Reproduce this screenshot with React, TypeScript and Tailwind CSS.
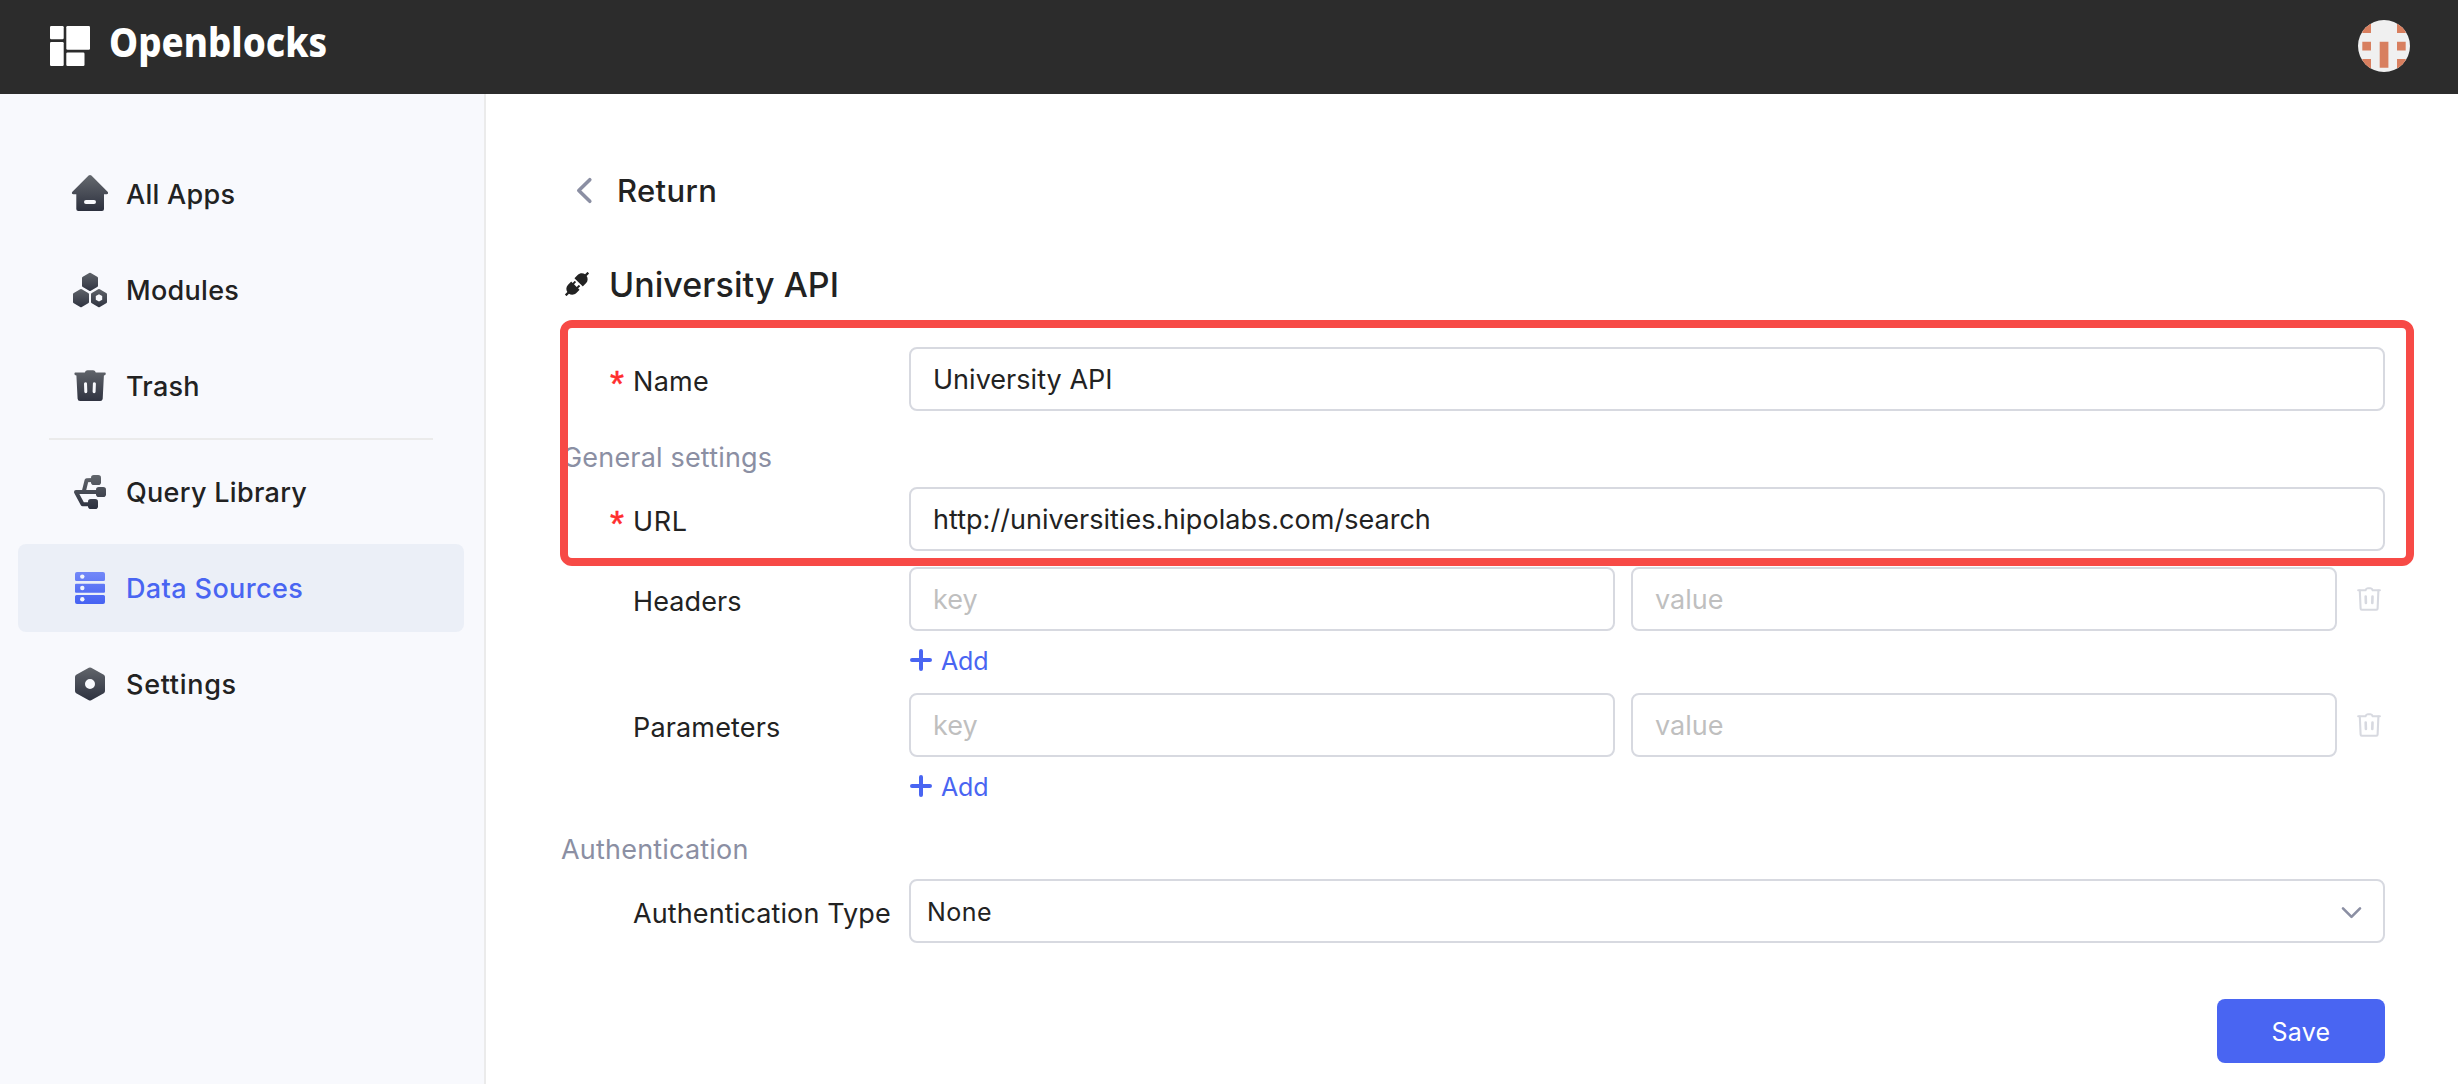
import React from "react";
import { AiFillApi } from "react-icons/ai";

function Gradient({ id, from = "#62666c", to = "#2c303e" }: { id: string; from?: string; to?: string }) {
  return (
    <defs>
      <linearGradient id={id} x1="0" y1="3" x2="0" y2="37" gradientUnits="userSpaceOnUse">
        <stop offset="0" stopColor={from} />
        <stop offset="1" stopColor={to} />
      </linearGradient>
    </defs>
  );
}

const iconClass = "h-10 w-10 shrink-0";

const HomeIcon = () => (
  <svg viewBox="0 0 40 40" className={iconClass}>
    <Gradient id="g-home" />
    <path
      fill="url(#g-home)"
      fillRule="evenodd"
      d="M18.6 1.6a2 2 0 0 1 2.8 0L37.6 17.7c1 1 .5 2.6-1 2.6H34V35a2 2 0 0 1-2 2H8.3a2 2 0 0 1-2-2V20.3H3.4c-1.500 0-2-1.600-1-2.600zM16 26a2 2 0 0 0 0 4h8a2 2 0 0 0 0-4z"
    />
  </svg>
);

const ModulesIcon = () => (
  <svg viewBox="0 0 40 40" className={iconClass}>
    <defs>
      <linearGradient id="g-mod" x1="0" y1="0" x2="0" y2="1">
        <stop offset="0" stopColor="#5f6369" />
        <stop offset="1" stopColor="#2f3340" />
      </linearGradient>
    </defs>
    <path fill="url(#g-mod)" d="M19.200 3a1.600 1.600 0 0 1 1.600 0l6.400 3.700a1.600 1.600 0 0 1 .8 1.400v7.600a1.600 1.600 0 0 1-.8 1.400l-6.400 3.700a1.600 1.600 0 0 1-1.600 0l-6.400-3.700a1.600 1.600 0 0 1-.8-1.400V8.100a1.600 1.600 0 0 1 .8-1.400z" />
    <path fill="url(#g-mod)" d="M10.200 19.200a1.600 1.600 0 0 1 1.600 0l6.400 3.700a1.600 1.600 0 0 1 .8 1.400v7.600a1.600 1.600 0 0 1-.8 1.400L11.800 36.900a1.600 1.600 0 0 1-1.600 0l-6.400-3.600a1.600 1.600 0 0 1-.8-1.400v-7.600a1.600 1.600 0 0 1 .8-1.400z" />
    <path fill="url(#g-mod)" fillRule="evenodd" d="M28.200 19.200a1.600 1.600 0 0 1 1.600 0l6.400 3.700a1.600 1.600 0 0 1 .8 1.400v7.600a1.600 1.600 0 0 1-.8 1.400L29.800 36.900a1.600 1.600 0 0 1-1.600 0l-6.400-3.600a1.600 1.600 0 0 1-.8-1.400v-7.600a1.600 1.600 0 0 1 .8-1.400zM29 24.200l-3.200 1.800v3.700l3.200 1.900 3.200-1.900V26z" />
  </svg>
);

const TrashIcon = () => (
  <svg viewBox="0 0 40 40" className={iconClass}>
    <Gradient id="g-trash" />
    <path
      fill="url(#g-trash)"
      fillRule="evenodd"
      d="M14.800 6.600C15.500 5 16.200 4.200 17.500 4.200h5.600c1.300 0 2 .8 2.700 2.400h9c1.400 0 1.400 2.800-.9 2.900l-1.200 23.200A2.500 2.500 0 0 1 30.200 35H10.100a2.500 2.500 0 0 1-2.500-2.300L6.400 9.500C4 9.400 4 6.600 5.400 6.600zM15.500 16.200a1.500 1.500 0 0 0-1.500 1.600l.3 7.900a1.500 1.500 0 0 0 3-.1l-.3-8a1.500 1.500 0 0 0-1.500-1.400zM24.400 16.200a1.500 1.500 0 0 0-1.500 1.400l-.3 8a1.500 1.500 0 0 0 3 .1l.3-7.900a1.500 1.500 0 0 0-1.500-1.600z"
    />
  </svg>
);

const QueryIcon = () => (
  <svg viewBox="0 0 40 40" className={iconClass}>
    <Gradient id="g-query" />
    <g fill="none" stroke="url(#g-query)" strokeWidth="4" strokeLinejoin="round">
      <path d="M13.800 19.500L16.600 8.200L23 8.100" />
      <path strokeLinecap="round" d="M27 20.100L6 20L12.600 32.300L20 32.200" />
    </g>
    <g fill="url(#g-query)">
      <rect x="21" y="3" width="10" height="10" rx="2.800" />
      <rect x="26" y="15" width="10" height="10" rx="2.800" />
      <rect x="18" y="27" width="10" height="10" rx="2.800" />
    </g>
  </svg>
);

const DataIcon = () => (
  <svg viewBox="0 0 40 40" className={iconClass}>
    <Gradient id="g-data" from="#7489f8" to="#4461f2" />
    <path fill="url(#g-data)" d="M7 4h26a2 2 0 0 1 2 2v5.500a1.500 1.500 0 0 1-1.500 1.500h-27A1.500 1.500 0 0 1 5 11.500V6a2 2 0 0 1 2-2zM6 15.800h28a1 1 0 0 1 1 1v6.900a1 1 0 0 1-1 1H6a1 1 0 0 1-1-1v-6.900a1 1 0 0 1 1-1zM6.500 27h27a1.500 1.500 0 0 1 1.500 1.500V34a2 2 0 0 1-2 2H7a2 2 0 0 1-2-2v-5.500A1.500 1.500 0 0 1 6.500 27z" />
    <g fill="#f1f4fc">
      <circle cx="12.300" cy="8.600" r="2.200" />
      <circle cx="12.300" cy="20" r="2.200" />
      <circle cx="12.300" cy="31.200" r="2.200" />
    </g>
  </svg>
);

const SettingsIcon = () => (
  <svg viewBox="0 0 40 40" className={iconClass}>
    <Gradient id="g-set" />
    <path
      fill="url(#g-set)"
      fillRule="evenodd"
      d="M18.800 3.800a2.400 2.400 0 0 1 2.400 0l12.600 7a2.400 2.400 0 0 1 1.200 2.100v14.200a2.400 2.400 0 0 1-1.200 2.100l-12.600 7a2.400 2.400 0 0 1-2.400 0l-12.600-7A2.400 2.400 0 0 1 5 27.100V12.900a2.400 2.400 0 0 1 1.200-2.100zM20 15a5 5 0 1 0 0 10a5 5 0 0 0 0-10z"
    />
  </svg>
);

const DeleteIcon = () => (
  <svg viewBox="0 0 24 24" className="mr-1 ml-5 h-6 w-6 shrink-0" fill="none" stroke="#d7d9e0" strokeWidth="2.100" strokeLinecap="round" strokeLinejoin="round">
    <path d="M1.200 3.300h7.300c.5-1.500 1.300-2 2.300-2h2.600c1 0 1.800.5 2.300 2h7.200" />
    <path d="M2.800 3.500l.8 18.100c0 .9.300 1.200 1.200 1.200h14.600c.9 0 1.200-.3 1.200-1.200l.8-18.100" />
    <path strokeWidth="2.600" d="M8.700 9.500l.2 6.500M15.500 9.500l-.2 6.500" />
  </svg>
);

const fieldClass =
  "h-16 min-w-0 flex-1 rounded-lg border-2 border-[#d7d9e0] bg-white pl-[22px] pr-4 text-[27px] tracking-[0.03px] text-[#222] outline-none placeholder:text-[#bfbfbf] placeholder:opacity-100";

function Label({ text, required, tracking = "" }: { text: string; required?: boolean; tracking?: string }) {
  return (
    <div className="flex h-16 w-[347px] shrink-0 items-center pt-1.5 pl-12 text-[27px] whitespace-nowrap text-[#222]">
      <span className="w-[23px] pt-1.5 font-['Liberation_Sans',sans-serif] text-[36px] leading-none text-[#ff2d2d] [-webkit-text-stroke:0.5px_#ff2d2d]">
        {required ? "*" : ""}
      </span>
      <span className={tracking}>{text}</span>
    </div>
  );
}

function KeyValueRow({ label, tracking }: { label: string; tracking: string }) {
  return (
    <>
      <div className="flex items-center">
        <Label text={label} tracking={tracking} />
        <input className={fieldClass} placeholder="key" />
        <input className={`${fieldClass} ml-4`} placeholder="value" />
        <DeleteIcon />
      </div>
      <button className="ml-[347px] flex h-[62px] items-center text-[25px] tracking-[-0.2px] text-[#4965f2]">
        <svg viewBox="0 0 24 24" className="-mt-1 mr-[8px] h-6 w-6" stroke="#4965f2" strokeWidth="4" strokeLinecap="round">
          <path d="M12 3v18M3 12h18" />
        </svg>
        Add
      </button>
    </>
  );
}

type Item = { label: string; icon: React.ReactNode; tracking: string; active?: boolean };

const topItems: Item[] = [
  { label: "All Apps", icon: <HomeIcon />, tracking: "tracking-[0.28px]" },
  { label: "Modules", icon: <ModulesIcon />, tracking: "tracking-[0.3px]" },
  { label: "Trash", icon: <TrashIcon />, tracking: "tracking-[0.25px]" },
];
const bottomItems: Item[] = [
  { label: "Query Library", icon: <QueryIcon />, tracking: "tracking-[0.3px]" },
  { label: "Data Sources", icon: <DataIcon />, tracking: "tracking-[0.38px]", active: true },
  { label: "Settings", icon: <SettingsIcon />, tracking: "tracking-[0.7px]" },
];

function NavItem({ item }: { item: Item }) {
  return (
    <a
      className={`flex h-[88px] items-center gap-4 rounded-lg pl-[52px] text-[27px] font-[460] ${
        item.active ? "bg-[#ebeff7] text-[#4965f2]" : "text-[#222]"
      }`}
    >
      {item.icon}
      <span className={`pt-0.5 ${item.tracking}`}>{item.label}</span>
    </a>
  );
}

export default function App() {
  return (
    <div className="flex h-[1084px] w-full flex-col overflow-hidden bg-white font-[Inter,sans-serif]">
      <header className="flex h-[94px] shrink-0 items-start justify-between bg-[#2c2c2c] pr-12 pl-[50px]">
        <div className="flex">
          <svg viewBox="0 0 40 40" className="mt-[26px] h-10 w-10" fill="#fff">
            <rect x="0" y="0" width="13.700" height="13.300" rx="1.200" />
            <rect x="0" y="16" width="13.700" height="24" rx="1.200" />
            <rect x="16.300" y="0" width="23.700" height="23.700" rx="1.200" />
            <rect x="16.300" y="26.600" width="18.200" height="13.400" rx="1.200" />
          </svg>
          <span className="mt-4 ml-[19px] origin-left scale-x-[0.895] font-['Noto_Sans',sans-serif] text-[41px] leading-[50px] font-extrabold text-white">
            Openblocks
          </span>
        </div>
        <svg viewBox="0 0 52 52" className="mt-5 h-[52px] w-[52px] rounded-full bg-[#f0f0f0]" fill="#d87f5f">
          <path d="M4.300 4h8.700v9H4.300zM39 4h8.700v9H39zM4.300 21.700h8.700v8.700H4.300zM39 21.700h8.700v8.700H39zM4.300 39h8.700v9H4.300zM39 39h8.700v9H39zM21.700 21.700h8.700v26h-8.700z" />
        </svg>
      </header>

      <div className="flex flex-1">
        <aside className="w-[486px] shrink-0 border-r-2 border-[#ebebeb] bg-[#f8f9fd] pt-14 pr-5 pl-[18px]">
          <nav className="flex flex-col gap-2">
            {topItems.map((i) => (
              <NavItem key={i.label} item={i} />
            ))}
            <hr className="mr-[31px] ml-[31px] border-t-2 border-[#ebebeb]" />
            {bottomItems.map((i) => (
              <NavItem key={i.label} item={i} />
            ))}
          </nav>
        </aside>

        <main className="relative flex-1 pt-[77px] pr-[73px] pl-[76px]">
          <div className="flex h-10 items-center text-[31px] font-[460] tracking-[0.35px] text-[#222]">
            <svg viewBox="0 0 24 28" className="mr-[19px] ml-3 h-7 w-6" fill="none" stroke="#8b8fa3" strokeWidth="3.600" strokeLinecap="round" strokeLinejoin="round">
              <path d="M15.800 2.700L4.800 13.500L15.800 24.300" />
            </svg>
            Return
          </div>

          <h1 className="mt-[51px] flex h-11 items-center text-[34px] font-[460] tracking-[0.06px] text-[#222]">
            <AiFillApi className="mr-[17px] h-[30px] w-[30px]" />
            University API
          </h1>

          <form className="mt-[41px]">
            <div className="flex">
              <Label text="Name" required tracking="tracking-[0.3px]" />
              <input className={fieldClass} defaultValue="University API" />
            </div>
            <div className="flex h-[76px] items-center pt-[18px] text-[27px] tracking-[0.18px] text-[#8b8fa3]">General settings</div>
            <div className="mb-4 flex">
              <Label text="URL" required tracking="tracking-[0.6px]" />
              <input className={fieldClass} defaultValue="http://universities.hipolabs.com/search" />
            </div>
            <KeyValueRow label="Headers" tracking="tracking-[0.1px]" />
            <KeyValueRow label="Parameters" tracking="tracking-[0.15px]" />
            <div className="-ml-px flex h-[60px] items-center pt-0.5 text-[27px] tracking-[0.2px] text-[#8b8fa3]">Authentication</div>
            <div className="flex">
              <Label text="Authentication Type" tracking="tracking-[0.12px]" />
              <div className="flex h-16 flex-1 items-center justify-between rounded-lg border-2 border-[#d7d9e0] pr-5 pl-4 text-[25px] tracking-[0.45px] text-[#222]">
                <span className="pt-[3px]">None</span>
                <svg viewBox="0 0 24 24" className="mt-1 h-6 w-6" fill="none" stroke="#8b8fa3" strokeWidth="2.600" strokeLinecap="round" strokeLinejoin="round">
                  <path d="M4 7.300L12.500 15.800L21 7.300" />
                </svg>
              </div>
            </div>
            <div className="mt-14 flex justify-end">
              <button type="button" className="h-16 w-[168px] rounded-lg bg-[#4965f2] pt-[3px] text-[25px] tracking-[0.25px] text-white">
                Save
              </button>
            </div>
          </form>

          <div className="pointer-events-none absolute top-[226px] right-11 left-[74px] h-[246px] rounded-xl border-8 border-[#f74a46]" />
        </main>
      </div>
    </div>
  );
}
